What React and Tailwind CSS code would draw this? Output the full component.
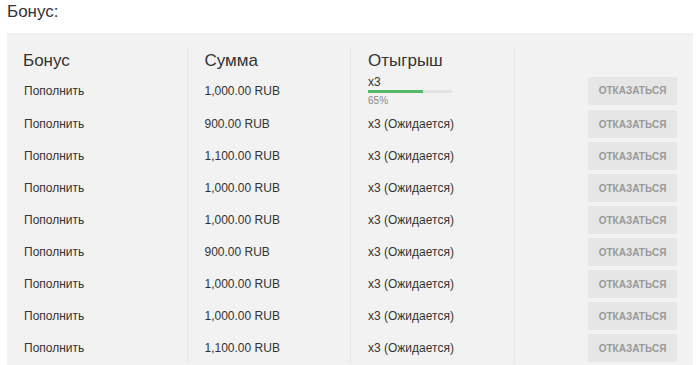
const rows = [
  { bonus: "Пополнить", sum: "1,000.00 RUB", progress: 65 },
  { bonus: "Пополнить", sum: "900.00 RUB" },
  { bonus: "Пополнить", sum: "1,100.00 RUB" },
  { bonus: "Пополнить", sum: "1,000.00 RUB" },
  { bonus: "Пополнить", sum: "1,000.00 RUB" },
  { bonus: "Пополнить", sum: "900.00 RUB" },
  { bonus: "Пополнить", sum: "1,000.00 RUB" },
  { bonus: "Пополнить", sum: "1,000.00 RUB" },
  { bonus: "Пополнить", sum: "1,100.00 RUB" },
];

const cell = "flex items-center";
const divided = "flex items-center border-l border-[#e6e6e6] pl-[17px]";

function Wager({ progress }) {
  if (progress === undefined) return <span>x3 (Ожидается)</span>;
  return (
    <div className="flex flex-col">
      <span className="leading-[14px]">x3</span>
      <div className="mt-[1px] h-[3px] w-[84px] bg-[#e3e3e3]">
        <div className="h-full bg-[#52b86a]" style={{ width: `${progress}%` }} />
      </div>
      <span className="mt-[2px] text-[10px] leading-[12px] text-[#888]">{progress}%</span>
    </div>
  );
}

export default function App() {
  return (
    <div className="min-h-[365px] bg-white px-[7px] font-['Liberation_Sans',Arial,sans-serif] text-[#333]">
      <h2 className="text-[17px] leading-[24px]">Бонус:</h2>

      <div className="mt-[9px] bg-[#f2f2f2] px-4 pt-[15px] pb-6">
        <div className="grid grid-cols-4 text-[12px]">
          {/* Header */}
          <div className={`${cell} h-[25px] text-[17px]`}>Бонус</div>
          <div className={`${divided} h-[25px] text-[17px]`}>Сумма</div>
          <div className={`${divided} h-[25px] text-[17px]`}>Отыгрыш</div>
          <div className={`${divided} h-[25px]`} />

          {rows.map((r, i) => {
            const h = i === 0 ? "h-[35px]" : "h-[32px]";
            return [
              <div key={`b${i}`} className={`${cell} ${h} pl-px`}>{r.bonus}</div>,
              <div key={`s${i}`} className={`${divided} ${h}`}>{r.sum}</div>,
              <div key={`w${i}`} className={`${divided} ${h}`}>
                <Wager progress={r.progress} />
              </div>,
              <div key={`a${i}`} className={`${divided} ${h} justify-end`}>
                <button className="h-[28px] w-[89px] rounded-[2px] bg-[#e6e6e6] text-[10px] font-bold uppercase text-[#999]">
                  Отказаться
                </button>
              </div>,
            ];
          })}
        </div>
      </div>
    </div>
  );
}
